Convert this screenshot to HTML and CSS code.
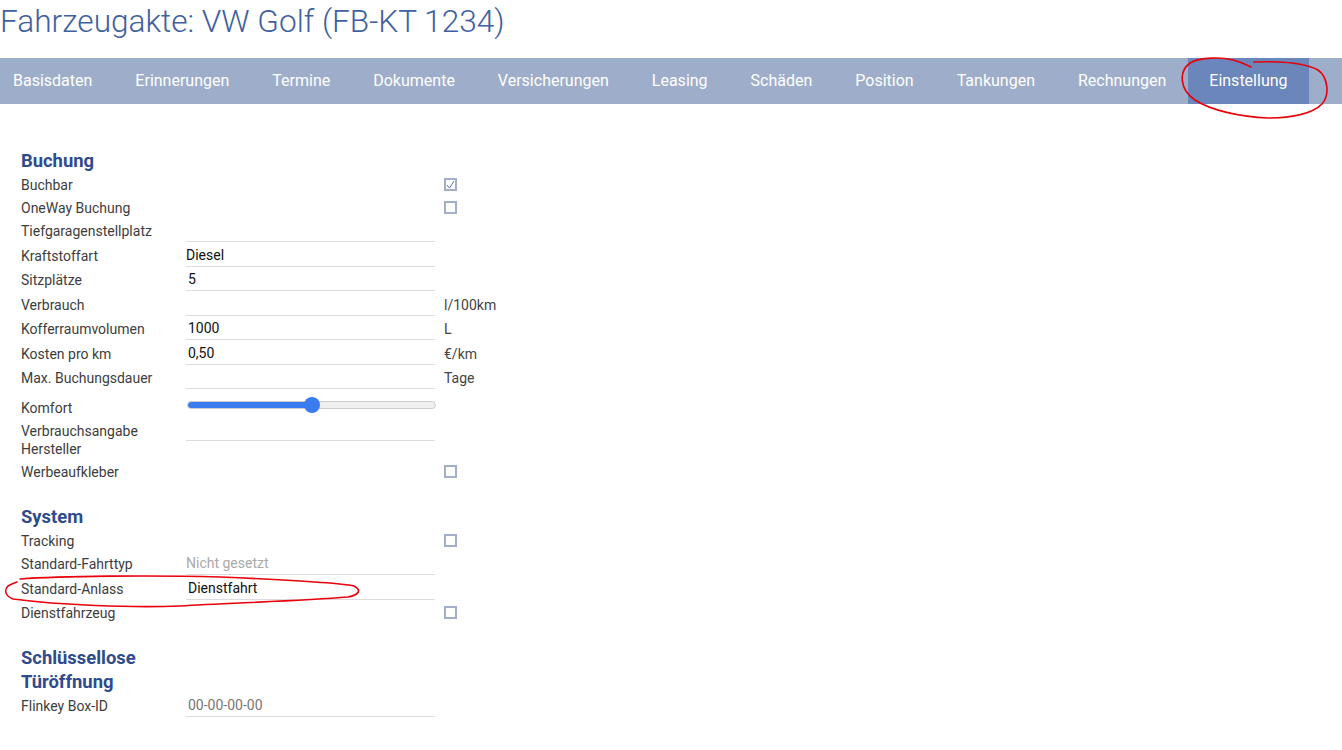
FILE: index.html
```html
<!DOCTYPE html>
<html lang="de">
	<head>
		<meta charset="utf-8" />
		<title>Fahrzeugakte</title>
		<link rel="stylesheet" href="styles.css">
	</head>
	<body>
		<h1 class="title">Fahrzeugakte: VW Golf (FB-KT 1234)</h1>

		<ul class="tabs">
			<li>Basisdaten</li>
			<li>Erinnerungen</li>
			<li>Termine</li>
			<li>Dokumente</li>
			<li>Versicherungen</li>
			<li>Leasing</li>
			<li>Schäden</li>
			<li>Position</li>
			<li>Tankungen</li>
			<li>Rechnungen</li>
			<li class="active">Einstellung</li>
		</ul>

		<div class="content">
			<div class="section">
				<h2>Buchung</h2>
				<div class="row check-row">
					<label>Buchbar</label>
					<span class="box checked">
						<svg width="9" height="9" viewBox="0 0 9 9"><path d="M1 5 L3.5 8 L8 1" fill="none" stroke="#5b70a6" stroke-width="1"/></svg>
					</span>
				</div>
				<div class="row check-row">
					<label>OneWay Buchung</label>
					<span class="box"></span>
				</div>
				<div class="row">
					<label>Tiefgaragenstellplatz</label>
					<input class="field" type="text" value="">
				</div>
				<div class="row">
					<label>Kraftstoffart</label>
					<input class="field flush" type="text" value="Diesel">
				</div>
				<div class="row">
					<label>Sitzplätze</label>
					<input class="field" type="text" value="5">
				</div>
				<div class="row">
					<label>Verbrauch</label>
					<input class="field" type="text" value="">
					<span class="unit">l/100km</span>
				</div>
				<div class="row">
					<label>Kofferraumvolumen</label>
					<input class="field" type="text" value="1000">
					<span class="unit">L</span>
				</div>
				<div class="row">
					<label>Kosten pro km</label>
					<input class="field" type="text" value="0,50">
					<span class="unit">€/km</span>
				</div>
				<div class="row">
					<label>Max. Buchungsdauer</label>
					<input class="field" type="text" value="">
					<span class="unit">Tage</span>
				</div>
				<div class="row slider-row">
					<label>Komfort</label>
					<input class="slider" type="range" min="0" max="10" value="5">
				</div>
				<div class="row tall-row">
					<label>Verbrauchsangabe Hersteller</label>
					<input class="field short" type="text" value="">
				</div>
				<div class="row check-row">
					<label>Werbeaufkleber</label>
					<span class="box"></span>
				</div>
			</div>

			<div class="section">
				<h2>System</h2>
				<div class="row check-row">
					<label>Tracking</label>
					<span class="box"></span>
				</div>
				<div class="row">
					<label>Standard-Fahrttyp</label>
					<input class="field flush muted" type="text" value="Nicht gesetzt">
				</div>
				<div class="row">
					<label>Standard-Anlass</label>
					<input class="field" type="text" value="Dienstfahrt">
				</div>
				<div class="row check-row">
					<label>Dienstfahrzeug</label>
					<span class="box"></span>
				</div>
			</div>

			<div class="section">
				<h2>Schlüssellose Türöffnung</h2>
				<div class="row">
					<label>Flinkey Box-ID</label>
					<input class="field" type="text" placeholder="00-00-00-00">
				</div>
			</div>
		</div>

		<!-- rote Markierungen aus dem Screenshot -->
		<svg class="marks" width="1342" height="750" viewBox="0 0 1342 750">
			<path d="M1254,62 C1280,61 1305,63 1318,70 C1328,77 1330,95 1322,104 C1312,114 1290,118 1268,118 C1240,117 1210,110 1195,100 C1180,90 1178,72 1190,63 C1200,57 1222,57 1233,60 C1241,62 1247,65 1251,67" />
			<path d="M20,579 C60,576 150,575 220,577 C290,580 340,583 354,586 C362,590 359,595 348,597 C300,601 230,603 180,606 C130,608 60,605 13,599 C5,596 4,590 8,586 C11,584 14,583 17,582" />
		</svg>
	</body>
</html>
```

FILE: styles.css
```css
body{
	margin: 0;
	font-family: Roboto, "Liberation Sans", sans-serif;
	color: #3d3d3d;
	background: #fff;
}
.title{
	margin: 0 0 14px 0;
	font-size: 31.6px;
	font-weight: 300;
	line-height: 44px;
	color: #4060a0;
}

/* Reiter */
.tabs{
	display: flex;
	margin: 0;
	padding: 0;
	list-style: none;
	background-color: #9eaeca;
}
.tabs li{
	padding: 0 21.5px;
	height: 46px;
	line-height: 46px;
	font-size: 16px;
	color: #fff;
}
.tabs li:first-child{
	padding-left: 13px;
}
.tabs li.active{
	background-color: #6a86bb;
}

/* Formular */
.content{
	padding: 23px 0 0 21px;
}
.section{
	margin-top: 22px;
}
.section h2{
	width: 165px;
	margin: 0;
	font-size: 18.4px;
	font-weight: 700;
	line-height: 24px;
	color: #2e4b8d;
}
.row{
	display: grid;
	grid-template-columns: 165px 249px auto;
	height: 24.5px;
	font-size: 14px;
	line-height: 18px;
}
.row label{
	padding-top: 3px;
}
.check-row{
	height: 23px;
}
.check-row .box{
	grid-column: 3;
	align-self: center;
	margin-left: 9px;
}
.slider-row{
	height: 31.5px;
}
.slider-row label{
	padding-top: 8px;
}
.tall-row{
	height: 38px;
}
.tall-row label{
	padding-top: 0;
}
.field{
	box-sizing: border-box;
	width: 249px;
	height: 23px;
	margin: 0;
	padding: 0 2px;
	border: none;
	border-bottom: 1px solid #dcdcdc;
	outline: none;
	background: transparent;
	font-family: Roboto, "Liberation Sans", sans-serif;
	font-size: 14px;
	color: #111;
}
.field.flush{
	padding-left: 0;
}
.field.short{
	height: 19px;
}
.field.muted{
	color: #aaa;
}
.field::placeholder{
	color: #777;
}
.unit{
	padding-top: 3px;
	margin-left: 9px;
	color: #444;
}

/* Kästchen */
.box{
	box-sizing: border-box;
	display: block;
	width: 13px;
	height: 13px;
	border: 2px solid #a3aecb;
	background: #fff;
}
.box svg{
	display: block;
}

/* Schieberegler */
.slider{
	-webkit-appearance: none;
	appearance: none;
	box-sizing: border-box;
	width: 249px;
	height: 8px;
	margin: 10px 0 0 1px;
	border: 1px solid #cdcdcd;
	border-radius: 4px;
	background: linear-gradient(to right, #3b7bf0 50%, #efefef 50%);
}
.slider::-webkit-slider-thumb{
	-webkit-appearance: none;
	width: 16px;
	height: 16px;
	border: none;
	border-radius: 50%;
	background: #3b7bf0;
}

/* Markierungen */
.marks{
	position: absolute;
	top: 0;
	left: 0;
	pointer-events: none;
}
.marks path{
	fill: none;
	stroke: #e8000b;
	stroke-width: 1.6;
	stroke-linecap: round;
}
```
